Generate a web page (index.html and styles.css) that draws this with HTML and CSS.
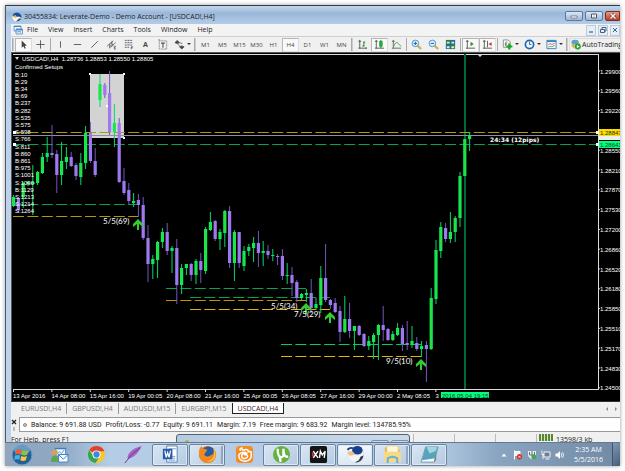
FILE: index.html
```html
<!DOCTYPE html>
<html lang="en">
<head>
<meta charset="utf-8">
<title>30455834: Leverate-Demo - Demo Account - [USDCAD!,H4]</title>
<link rel="stylesheet" href="styles.css">
</head>
<body>
<div class="desktop">
  <main class="window">
    <header class="titlebar">
      <svg class="app-icon" viewBox="0 0 10 10"><circle cx="5" cy="5" r="4.6" fill="#f6f8fb"/><path d="M.5 4C1 1 4 0 6.500 .7 9 1.500 10 4 9.500 6L7 4.500 4 5Z" fill="#164e9c"/><path d="M1 4 3.500 3 5 5 3 6Z" fill="#e8ad43"/><path d="M4 9.600C7 9.700 9 8 9.400 6.500L7 6.500Z" fill="#404b5b"/></svg>
      <span class="title">30455834: Leverate-Demo - Demo Account - [USDCAD!,H4]</span>
      <div class="caption">
        <button aria-label="Minimize"><svg viewBox="0 0 10 6"><path d="M2 3h6v2H2z" fill="#fff" stroke="#465468" stroke-width=".6"/></svg></button>
        <button aria-label="Restore"><svg viewBox="0 0 10 6"><path d="M2.500 1h5v4h-5z" fill="#fff" stroke="#465468"/><path d="M4.500 2.500h1v1h-1z" fill="#465468"/></svg></button>
        <button class="close" aria-label="Close"><svg viewBox="0 0 10 6"><path d="M2.500 .5 7.500 5.500M7.500 .5 2.500 5.500" stroke="#4e2020" stroke-width="2.600"/><path d="M2.500 .5 7.500 5.500M7.500 .5 2.500 5.500" stroke="#fff" stroke-width="1.500"/></svg></button>
      </div>
    </header>
    <nav class="menubar">
      <svg class="doc-icon" viewBox="0 0 10 10"><path d="M1 1h7v5H1zM3 4h6.500v5H3z" fill="#eef6fd" stroke="#4b87bd" stroke-width=".8"/><path d="M1 1.500h7M3 4.500h6.500" stroke="#4b87bd"/><path d="M4.500 7.500 6 6.500 8 7.500" stroke="#4b87bd" stroke-width=".7" fill="none"/></svg>
      <button>File</button><button>View</button><button>Insert</button><button>Charts</button><button>Tools</button><button>Window</button><button>Help</button>
      <div class="mdi">
        <button aria-label="Minimize chart"><svg viewBox="0 0 8 8"><path d="M2 6h4" stroke="#44617f" stroke-width="1.200"/></svg></button>
        <button aria-label="Restore chart"><svg viewBox="0 0 8 8"><path d="M3 3V1.500h4V5H5.500M1.500 3.500h4v3h-4z" stroke="#44617f" fill="none"/></svg></button>
        <button aria-label="Close chart"><svg viewBox="0 0 8 8"><path d="M2 2 6 6M6 2 2 6" stroke="#44617f"/></svg></button>
      </div>
    </nav>
    <div class="toolbar">
      <i class="grip"></i>
      <button class="tool on" aria-label="Cursor"><svg viewBox="0 0 12 12"><path d="M4 1.500V9.500L6 8 7.200 10.500 8.500 10 7.300 7.500 9.500 7Z" fill="#444"/></svg></button>
      <button class="tool" aria-label="Crosshair"><svg viewBox="0 0 12 12"><path d="M6 1.500v9M1.500 6h9" stroke="#555"/></svg></button>
      <i class="sep"></i>
      <button class="tool" aria-label="Vertical line"><svg viewBox="0 0 12 12"><path d="M6 2.500v7" stroke="#555"/></svg></button>
      <button class="tool" aria-label="Horizontal line"><svg viewBox="0 0 12 12"><path d="M2 6h8" stroke="#555"/></svg></button>
      <button class="tool" aria-label="Trendline"><svg viewBox="0 0 12 12"><path d="M2.500 9.500 9.500 2.500" stroke="#555"/></svg></button>
      <button class="tool" aria-label="Channel"><svg viewBox="0 0 12 12"><path d="M1 8 8 2M3.500 10 10.500 4M3 5.500 6 8.500M5 4 8 7M6.500 2v6M4 5v5" stroke="#555" stroke-width=".8"/><path d="M9 8v3h2M9 9.500h1.500M9 8h2" stroke="#444" stroke-width=".7" fill="none"/></svg></button>
      <button class="tool" aria-label="Fibonacci"><svg viewBox="0 0 12 12"><path d="M2 1.500h8M2 4h8M2 6.500h8M2 9h5" stroke="#555" stroke-dasharray="1.300 .4"/><path d="M9 11V8.500h2M9 9.700h1.500" stroke="#444" stroke-width=".8" fill="none"/></svg></button>
      <button class="tool letter" aria-label="Text">A</button>
      <button class="tool" aria-label="Text label"><svg viewBox="0 0 12 12"><path d="M2.500 2h8v9h-8z" stroke="#777" stroke-dasharray="1 .6" fill="none"/><path d="M4.500 4.500h4M6.500 4.500v5" stroke="#555" stroke-width="1.200"/><path d="M1.500 1h2" stroke="#777"/></svg></button>
      <button class="tool menu" aria-label="Arrows"><svg viewBox="0 0 12 12"><path d="M1 4 3.500 1.500 6 4 3.500 5Z M6 8.500 8.500 11 11 8.500 8.500 7.500ZM4 5.500 7 8.500M6 4 9 5" fill="#444" stroke="#444" stroke-width=".8"/></svg><b></b></button>
      <i class="grip"></i>
      <button class="tool tf">M1</button><button class="tool tf">M5</button><button class="tool tf">M15</button><button class="tool tf">M30</button><button class="tool tf">H1</button><button class="tool tf on">H4</button><button class="tool tf">D1</button><button class="tool tf">W1</button><button class="tool tf">MN</button>
      <i class="grip"></i>
      <button class="tool" aria-label="Bar chart"><svg viewBox="0 0 12 12"><path d="M3 1v9.500M1.500 2.500h3M1.500 10h9M10 9v2" stroke="#555"/><path d="M7.500 2.500v6M6 7.500h1.500M7.500 3.500H9" stroke="#26983a" stroke-width="1.200"/></svg></button>
      <button class="tool on" aria-label="Candlesticks"><svg viewBox="0 0 12 12"><path d="M2.500 1v9.500M1 2.500h3M1 10h10" stroke="#555"/><path d="M7.500 1v9" stroke="#188c28"/><path d="M6 2.500h3V8H6z" fill="#22b035" stroke="#188c28" stroke-width=".6"/></svg></button>
      <button class="tool" aria-label="Line chart"><svg viewBox="0 0 12 12"><path d="M2.500 1v9.500M1 2.500h3M1 10h10" stroke="#666"/><path d="M3 8C5 3 7 3 8 5L11 8" stroke="#36a047" fill="none"/></svg></button>
      <i class="sep"></i>
      <button class="tool" aria-label="Zoom in"><svg viewBox="0 0 12 12"><path d="m7 7 4 4" stroke="#d8aa36" stroke-width="2.200"/><circle cx="4.800" cy="4.800" r="3.600" fill="#d5ecfb" stroke="#4a91c8"/><path d="M4.800 3v3.600M3 4.800h3.600" stroke="#1e6dad" stroke-width="1.100"/></svg></button>
      <button class="tool" aria-label="Zoom out"><svg viewBox="0 0 12 12"><path d="m7 7 4 4" stroke="#d8aa36" stroke-width="2.200"/><circle cx="4.800" cy="4.800" r="3.600" fill="#d5ecfb" stroke="#4a91c8"/><path d="M3 4.800h3.600" stroke="#1e6dad" stroke-width="1.100"/></svg></button>
      <button class="tool" aria-label="Tile windows"><svg viewBox="0 0 12 12"><path d="M1 1h10v10H1z" fill="#2c7f45"/><path d="M1 6h5v5H1zM6 1h5v5H6z" fill="#2b68b0"/><path d="M2 3h3v2H2zM7 3h3v2H7zM2 8h3v2H2zM7 8h3v2H7z" fill="#d8f1cb"/></svg></button>
      <i class="sep"></i>
      <button class="tool on" aria-label="Auto scroll"><svg viewBox="0 0 12 12"><path d="M2.500 1v9.500M1 2.500h3M1 10h10" stroke="#555"/><path d="M6 3v5l3.500-2.500Z" fill="#21943a"/></svg></button>
      <button class="tool on" aria-label="Chart shift"><svg viewBox="0 0 12 12"><path d="M2.500 1v9.500M1 2.500h3M1 10h10M6 2v7" stroke="#555"/><path d="M10.500 3.500v4L7 5.500Z" fill="#c63b2c"/></svg></button>
      <i class="sep"></i>
      <button class="tool menu" aria-label="Indicators"><svg viewBox="0 0 12 12"><path d="M1.500 1h5L9 3v6H1.500z" fill="#f7f7f7" stroke="#777" stroke-width=".8"/><path d="M4 8V4.500C4 3 5.500 3 6 3.500M3 5.500h2.500" stroke="#555" stroke-width=".8" fill="none"/><path d="M8 5v6.500M4.700 8.200h6.600" stroke="#17a526" stroke-width="2.400"/></svg><b></b></button>
      <button class="tool menu" aria-label="Periods"><svg viewBox="0 0 12 12"><circle cx="6" cy="6" r="4.500" fill="#e9f5fe" stroke="#1c68b5" stroke-width="1.800"/><path d="M6 3v3h2" stroke="#335" stroke-width=".8" fill="none"/></svg><b></b></button>
      <button class="tool menu" aria-label="Templates"><svg viewBox="0 0 12 12"><path d="M1 1.500h10v9H1z" fill="#f5f8fb" stroke="#3a7fbd"/><path d="M1 2.500h10" stroke="#3a7fbd" stroke-width="1.500"/><path d="m2.500 6 2-1 2 1 3-1.500" stroke="#a05030" stroke-width=".8" fill="none"/><path d="m2.500 9 2-1 2 .5L9.500 7" stroke="#31944a" stroke-width=".8" fill="none"/></svg><b></b></button>
      <i class="grip"></i>
      <button class="auto"><svg viewBox="0 0 12 12"><path d="M1 5 6 2l5 3-4 3Z" fill="#e9be45"/><ellipse cx="5.500" cy="3.300" rx="4" ry="2.500" fill="#5ba0d5"/><path d="M2 5v3l3 3V7Z" fill="#ddb044"/><circle cx="8.500" cy="8.300" r="3.300" fill="#23a434"/><path d="M7.500 6.500v3.600l3-1.800Z" fill="#fff"/></svg>AutoTrading</button>
    </div>
    <svg class="chart" id="chart" viewBox="12 53 608 348" role="img" aria-label="USDCAD!,H4 candlestick chart"></svg>
    <div class="tabs">
      <button>EURUSD!,H4</button><button>GBPUSD!,H4</button><button>AUDUSD!,M15</button><button>EURGBP!,M15</button><button class="active">USDCAD!,H4</button>
      <span class="arrows"><i class="left"></i><i class="right"></i></span>
    </div>
    <div class="terminal">
      <button class="x" aria-label="Close terminal"><svg viewBox="0 0 6 12"><path d="m1 1 4 4M5 1 1 5" stroke="#222" stroke-width="1.300"/><path d="M3 8v4" stroke="#bbb" stroke-width="2"/></svg></button>
      <p><i class="dot"></i><span>Balance: 9 691.88 USD</span><span>Profit/Loss: -0.77</span><span>Equity: 9 691.11</span><span>Margin: 7.19</span><span>Free margin: 9 683.92</span><span>Margin level: 134785.95%</span></p>
    </div>
    <footer class="status">
      <span class="help">For Help, press F1</span>
      <div class="behind"><i></i><b></b><b></b></div>
      <span class="cell"></span><span class="cell"></span><span class="cell"></span><span class="traffic"><i></i>13598/3 kb</span>
    </footer>
  </main>
  <nav class="taskbar">
    <button class="task start" aria-label="Start"><svg viewBox="0 0 22 22"><circle cx="11" cy="11" r="10" fill="#235e96" stroke="#6d9fc9"/><ellipse cx="11" cy="6" rx="8" ry="4.500" fill="#85b4d8" opacity=".7"/><path d="M5 6q3-1.500 5.500 0L9.500 10.500q-2.500-1.300-5.500 0Z" fill="#e9602b"/><path d="M11.500 6.300q3 1.500 6 0l-1.300 4.500q-3 1.300-5.700 0Z" fill="#90c43c"/><path d="M3.800 11.600q3-1.200 5.500 0l-1 4.200q-2.500-1.300-5 .1Z" fill="#49aee6"/><path d="M10.300 12q3 1.400 5.700 0l-1.200 4.200q-2.800 1.400-5.500 0Z" fill="#fbc740"/></svg></button>
    <button class="task" aria-label="Mail"><svg viewBox="0 0 20 20"><path d="M5 3h12v9H5z" fill="#3b7fc1"/><path d="M6 4.500h10V11H6z" fill="#edf6fd"/><path d="m7 10 3-3 2 2 3-4" stroke="#5f9ed0" fill="none"/><circle cx="5" cy="8" r="3.200" fill="#d4a05a"/><path d="M1 18q0-7 4-7t4.500 7Z" fill="#58a854"/><path d="M9 10h10v8H9z" fill="#f4f9ff" stroke="#3e80bd"/><path d="m9 10 5 5 5-5" fill="none" stroke="#3e80bd"/></svg></button>
    <button class="task" aria-label="Chrome"><svg viewBox="0 0 20 20"><circle cx="10" cy="10" r="9" fill="#f4c82d"/><path d="M10 10 2.200 5.500A9 9 0 0 1 18.300 6.500H10Z" fill="#df4033"/><path d="M2.200 5.500A9 9 0 0 0 9 19l4.500-7-6.500 0Z" fill="#30a851"/><circle cx="10" cy="10" r="4.300" fill="#fff"/><circle cx="10" cy="10" r="3.300" fill="#3f84e8"/></svg></button>
    <button class="task" aria-label="Feather"><svg viewBox="0 0 20 20"><path d="M18.500 1Q10 3 6 8 3 12 4 15q8-3 11-8Q17 5 18.500 1Z" fill="#a563c4"/><path d="M1 19Q7 9 17 3" fill="none" stroke="#6b378b"/></svg></button>
    <button class="task open" aria-label="Word"><svg viewBox="0 0 20 20"><path d="M6 1h11v17H6z" fill="#fff" stroke="#5680b7"/><path d="M8 4h8M8 12h7M8 14h7M8 16h7" stroke="#78a0cf"/><path d="M2 4h10v11H2z" fill="#285ba7"/><path d="m4 6 1.500 7L7 8l1.500 5L10 6" fill="none" stroke="#fff" stroke-width="1.300"/></svg></button>
    <button class="task open stack" aria-label="Firefox"><svg viewBox="0 0 20 20"><circle cx="10" cy="10" r="9" fill="#e66b16"/><circle cx="11" cy="8" r="6.500" fill="#245ca6"/><path d="M1 8Q1 3 4 1q0 2 2 3l4 1-2 3q-2 1-1 3 3 2 6 0 4-1 4-6 3 4 1 9-3 6-9 5Q1 17 1 8Z" fill="#f18a1e"/><path d="M16 3q3 4 2 10-3 5-8 5 8-4 7-9Z" fill="#f9cd36"/></svg></button>
    <button class="task" aria-label="UC Browser"><svg viewBox="0 0 20 20"><rect x="1" y="1" width="18" height="18" rx="4" fill="#f68b1f"/><path d="M6 6q-2-2 1-3 0 3 3 2 4-1 4 2 4-1 3 3 1 6-6 7-7 0-7-6 0-2 3-3 3-1 6 1-5-1-6 2 0 4 4 3 3-1 2-3-2-2-3 0" fill="none" stroke="#fff" stroke-width="1.600"/></svg></button>
    <button class="task open" aria-label="uTorrent"><svg viewBox="0 0 20 20"><circle cx="10" cy="10" r="9" fill="#67b13f"/><path d="M6 4q0 7 2 8 3 2 4-1V4q0 10 5 8M8 12q1 4 1 6" fill="none" stroke="#fff" stroke-width="2.400"/></svg></button>
    <button class="task open" aria-label="XM"><svg viewBox="0 0 20 20"><rect x="1" y="1" width="18" height="18" rx="2" fill="#141414"/><path d="m3 7 3 3-3 3" fill="#d42b2b"/><path d="m4.500 6.500 5 7M9.500 6.500l-5 7M11 13.500l1-7 2 4 3-4-1 7" fill="none" stroke="#fff" stroke-width="1.500"/></svg></button>
    <button class="task open current" aria-label="Trading terminal"><svg viewBox="0 0 20 20"><circle cx="10" cy="10" r="8.500" fill="#f3f4f7" stroke="#c9d0da" stroke-width=".5"/><ellipse cx="12" cy="5.500" rx="5.500" ry="4.500" fill="#173f8e"/><path d="M1.500 5q3-3 6-1.500" stroke="#173f8e" stroke-width="2" fill="none"/><path d="M2 8q3-3 6 0l2 2-4 1-3 0Z" fill="#efc07a"/><path d="M9 18.500q8 0 9.500-7.500l-3 1-2 4Z" fill="#353b46"/></svg></button>
    <button class="task open stack" aria-label="Explorer"><svg viewBox="0 0 20 20"><path d="M2 3h6l1 2h9v13H2z" fill="#e8b94f"/><path d="M4 1h12v9H4z" fill="#fff7d8" stroke="#cfb35c" stroke-width=".5"/><path d="M1 7h18v11H1z" fill="#f6da83"/><path d="M5 19v-5q5-3 10 0v5" fill="none" stroke="#6bb2dc" stroke-width="2.200"/></svg></button>
    <button class="task open" aria-label="Notepad"><svg viewBox="0 0 20 20"><path d="M6 2h13l-4 16H1Z" fill="#f3faff" stroke="#7798aa"/><path d="M6 2h13l-3 12-14 2Z" fill="#57a3bd"/><path d="M7 2h11l-1 4-7 3Z" fill="#a3d7df"/><path d="m15 18 2-2V9l-2 8Z" fill="#8b795b"/></svg></button>
    <div class="tray">
      <button aria-label="Show hidden icons"><svg viewBox="0 0 10 10"><path d="m2.500 6.500 2.500-3 2.500 3Z" fill="#fff"/></svg></button>
      <button aria-label="Action Center"><svg viewBox="0 0 10 10"><path d="M1.500 .5v9M2 1.500h5v4H2" stroke="#fff" fill="#f2f2f2"/><circle cx="6.500" cy="6.800" r="2.700" fill="#d3332d"/><path d="m5.500 5.800 2 2m0-2-2 2" stroke="#fff" stroke-width=".8"/></svg></button>
      <button aria-label="Updates"><svg viewBox="0 0 10 10"><path d="M1 1h8v4l-2 4H4L1 6Z" fill="#e7edf3"/><path d="M2.500 2v3h5V2M5 1v4" stroke="#66717b" fill="none"/><circle cx="6.800" cy="6.800" r="2.500" fill="#48a754"/></svg></button>
      <button aria-label="Network"><svg viewBox="0 0 10 10"><path d="M3 2h6v5H3zM4.500 9h4M1 .5v4h2M2 4v5" fill="#6f7d91" stroke="#fff" stroke-width=".9"/></svg></button>
      <button aria-label="Volume"><svg viewBox="0 0 10 10"><path d="M.5 3.500h2l2.500-2.500v8L2.500 6.500h-2Z" fill="#fff"/><path d="M6 3q1.500 2 0 4M7.500 2q2.300 3 0 6" stroke="#fff" stroke-width=".8" fill="none"/></svg></button>
    </div>
    <div class="clock"><span>2:35 AM</span><span>5/5/2016</span></div>
    <button class="peek" aria-label="Show desktop"></button>
  </nav>
</div>
<script src="chart.js"></script>
</body>
</html>
```
FILE: styles.css
```css
* { box-sizing: border-box; }
body {
  margin: 0;
  background: #fff;
  font-family: "Open Sans", "Noto Sans", sans-serif;
  font-size: 7px;
  line-height: 10px;
  color: #222;
}
button {
  margin: 0;
  padding: 0;
  border: 0;
  background: none;
  font: inherit;
  color: inherit;
}
svg { display: block; }
.desktop {
  margin: 5px;
  box-shadow: 0 0 4px #999;
}
.window {
  padding-left: 5px;
  border-left: 1px solid #4e5a68;
  border-top: 1px solid #333b45;
  background: #bcd2ec;
  overflow: hidden;
}
.titlebar {
  display: flex;
  align-items: center;
  height: 18px;
  margin-left: -5px;
  padding: 3px 0 0 6px;
  gap: 2px;
  background: linear-gradient(#c3d8ed, #9ab7d9 40%, #b3cce8);
}
.app-icon, .doc-icon { width: 10px; height: 10px; }
.title { flex: 1; white-space: nowrap; }
.caption {
  display: flex;
  align-self: flex-start;
  gap: 2px;
  margin-top: 2px;
}
.caption button {
  width: 18px;
  height: 10px;
  border: 1px solid #5f7896;
  border-radius: 2px;
  background: linear-gradient(#dbe7f4, #9fb8d5);
}
.caption svg { width: 10px; height: 6px; margin: 1px auto; }
.caption .close {
  width: 15px;
  border-color: #7c2b22;
  border-radius: 2px 0 0 2px;
  background: linear-gradient(#e79a84, #c23c20);
}
.menubar {
  display: flex;
  align-items: center;
  gap: 10px;
  height: 12px;
  padding-left: 2px;
  background: #f3f3f4;
}
.doc-icon { margin-right: -6px; }
.mdi { display: flex; gap: 2px; margin-left: auto; }
.mdi button {
  width: 10px;
  height: 11px;
  border: 1px solid #b9cbdc;
  background: #e6eff8;
}
.mdi svg { width: 8px; height: 8px; }
.toolbar {
  display: flex;
  align-items: center;
  height: 16px;
  background: #f0f0f0;
  border-top: 1px solid #cfcfcf;
}
.tool {
  display: flex;
  flex: none;
  align-items: center;
  justify-content: center;
  width: 17px;
  height: 14px;
  color: #444;
}
.tool svg { width: 11px; height: 11px; }
.on { background: #f9f9f9; border: 1px solid #b6b6b6; border-right-color: #ddd; border-bottom-color: #ddd; }
.letter { font-weight: 700; }
.tf { font-size: 6px; }
.menu { width: 22px; gap: 2px; }
.menu b, .arrows i { border: 2px solid transparent; border-top-color: #333; height: 2px; }
.grip {
  flex: none;
  width: 2px;
  height: 13px;
  margin: 0 1px;
  border-left: 1px solid #aaa;
  border-right: 1px solid #ccc;
}
.sep { flex: none; width: 1px; height: 13px; margin: 0 1px; background: #aaa; }
.auto {
  display: flex;
  flex: 1;
  align-items: center;
  gap: 1px;
  min-width: 0;
  height: 14px;
  overflow: hidden;
  border: 1px solid #ddd;
  border-right: 0;
  white-space: nowrap;
}
.auto svg { flex: none; width: 11px; height: 11px; }
.chart {
  width: 100%;
  height: auto;
  background: #000;
  border: solid #555;
  border-width: 1px 0 0 1px;
}
.chart text { font-family: "Liberation Sans", sans-serif; font-size: 6px; fill: #fff; }
.chart .setup { font-family: Lato, sans-serif; font-size: 8px; }
.chart .timer { font-family: "DejaVu Sans", sans-serif; font-size: 6px; font-weight: 700; }
.chart .dark { fill: #063c20; }
.tabs {
  display: flex;
  height: 14px;
  padding: 2px 0 0 5px;
  background: linear-gradient(#333 1px, #f0f0f0 1px);
  color: #777;
}
.tabs button {
  height: 11px;
  padding: 0 5px;
  border-right: 1px solid #999;
  line-height: 11px;
}
.tabs button:nth-child(4) { border-color: #222; }
.tabs .active {
  border: 1px solid #222;
  border-width: 0 1px 1px 0;
  background: #fff;
  color: #402535;
}
.arrows { display: flex; align-items: center; gap: 7px; margin-left: auto; padding-right: 1px; }
.arrows i { width: 4px; height: 4px; border-color: transparent; }
.arrows .left { border-right-color: #888; }
.arrows .right { border-left-color: #888; }
.terminal {
  display: flex;
  height: 17px;
  padding-top: 2px;
  gap: 2px;
  background: #f0f0f0;
  font-family: Roboto, sans-serif;
}
.terminal .x svg { width: 6px; height: 12px; }
.terminal p {
  display: flex;
  flex: 1;
  align-items: center;
  gap: 4px;
  margin: 0;
  padding-left: 3px;
  border: 1px solid #999;
  border-right: 0;
  background: #fff;
  white-space: nowrap;
}
.dot { width: 4px; height: 4px; border: 1px solid #888; border-radius: 50%; background: #ccc; }
.status {
  display: flex;
  height: 10px;
  padding-top: 2px;
  background: #f0f0f0;
  overflow: hidden;
  line-height: 12px;
  white-space: nowrap;
}
.help { flex: 0 0 165px; }
.behind {
  display: flex;
  flex: 0 0 234px;
  gap: 2px;
  height: 12px;
  border: 1px solid #53606e;
  border-radius: 3px 3px 0 0;
  background: linear-gradient(90deg, #b5cbe0, #c9daea);
}
.behind i { width: 4px; height: 4px; margin: 5px auto 0 8px; border-radius: 50%; background: #c8a441; }
.behind b { width: 18px; height: 6px; margin-top: 5px; border: 1px solid #7b91a8; border-radius: 2px; }
.cell { width: 41px; border-left: 1px solid #bbb; }
.behind + .cell { margin-left: 3px; }
.traffic { display: flex; gap: 3px; padding-left: 2px; border-left: 1px solid #bbb; }
.traffic i { width: 14px; height: 7px; background: repeating-linear-gradient(90deg, #588736 0 2px, #d9e6c8 2px 3px); }
.taskbar {
  display: flex;
  align-items: center;
  height: 24px;
  padding-left: 1px;
  border-top: 1px solid #65798f;
  background: linear-gradient(90deg, #91a6bd, #8fa8c3 9%, #b4cce5 17%, #b4cce5 70%, #8aa5c1 80%, #7189a4);
}
.task {
  display: flex;
  flex: none;
  align-items: center;
  justify-content: center;
  width: 36px;
  height: 22px;
  margin-right: 1px;
}
.task svg { width: 19px; height: 19px; }
.start { width: 31px; margin-right: 4px; }
.start svg { width: 22px; height: 22px; }
.open {
  border: 1px solid #6b84a0;
  border-radius: 2px;
  background: linear-gradient(135deg, #d9e6f3, #b4cae2);
  box-shadow: inset 0 0 0 1px #dce8f4;
}
.stack { box-shadow: inset 0 0 0 1px #dce8f4, inset -3px 0 #8ea6c0; }
.current { background: linear-gradient(#f4f8fc, #dbe7f4); }
.tray { display: flex; gap: 4px; margin-left: auto; }
.tray button, .tray svg { width: 10px; height: 10px; }
.clock { display: flex; flex-direction: column; align-items: center; width: 47px; color: #fff; }
.peek { width: 8px; height: 23px; border-left: 1px solid #405368; background: linear-gradient(135deg, #8098b1, #455e7a); }
```
FILE: chart.js
```js
// Each candle: direction (1 up, 0 down), wick top, wick bottom, body top, body bottom
const candles = [
  [1,195,207,197,206],[0,198,213,198,210],[1,182,208,183,197],[1,181,186,182,184],[1,165,215,182,184],
  [1,171,185,172,183],[1,153,174,157,173],[1,137,162,153,157],[0,125,158,153,155],[0,150,193,154,175],
  [1,142,185,161,175],[1,147,169,157,162],[0,152,167,157,166],[0,163,180,165,176],[1,153,185,163,177],
  [1,126,169,133,163],[0,122,163,133,161],[0,148,177,161,175],[1,74,107,84,100],[0,83,98,85,95],
  [0,71,135,93,132],[1,104,147,123,132],[0,118,183,123,182],[0,168,195,181,193],[0,183,204,190,201],
  [1,193,207,201,203],[0,194,217,200,205],[0,197,240,205,238],[0,225,282,238,264],[1,255,279,259,264],
  [1,241,278,242,260],[1,228,248,232,242],[0,223,255,232,251],[1,246,273,248,251],[0,239,304,248,285],
  [1,264,294,268,285],[1,264,275,264,268],[0,263,281,264,275],[1,259,284,261,275],[0,253,283,261,270],
  [1,227,274,229,271],[1,212,231,222,230],[0,220,241,221,239],[1,229,250,232,239],[1,210,247,211,233],
  [0,206,268,211,263],[1,230,281,232,263],[0,232,268,232,263],[1,246,271,251,266],[1,244,256,247,251],
  [1,237,262,243,248],[0,231,267,243,253],[1,241,266,251,253],[0,245,259,251,255],[1,249,261,255,256],
  [0,254,265,256,257],[0,249,280,256,276],[1,263,284,275,276],[0,267,296,275,283],[0,280,302,282,298],
  [1,293,300,294,298],[1,289,302,293,295],[0,279,313,293,308],[1,298,310,304,308],[1,266,313,278,305],
  [0,244,302,278,300],[0,299,309,300,305],[0,298,313,303,312],[0,306,342,311,332],[1,296,333,319,332],
  [0,303,338,319,331],[1,326,350,326,331],[0,325,336,326,335],[0,333,347,334,346],[1,336,350,341,346],
  [1,333,359,335,342],[1,324,360,325,335],[0,306,341,325,330],[0,328,341,329,340],[1,331,341,334,340],
  [1,323,336,328,335],[0,325,351,328,344],[0,321,350,343,345],[1,326,348,341,345],[0,337,351,343,349],
  [1,341,357,346,349],[0,341,382,345,349],[1,288,350,298,349],[1,240,304,250,299],[1,222,258,227,251],
  [0,223,242,228,239],[1,212,243,232,239],[1,216,242,218,232],[1,172,227,176,218],[1,139,176,139,176],
  [1,132,151,135,139]
];
const prices = ["1.29900","1.29560","1.29220","","1.28550","1.28210","1.27870","1.27530","1.27200",
  "1.26860","1.26520","1.26180","1.25850","1.25510","1.25170","1.24830","1.24500"];
const dates = ["13 Apr 2016","14 Apr 08:00","15 Apr 16:00","19 Apr 00:05","20 Apr 08:00","21 Apr 16:00",
  "25 Apr 00:05","26 Apr 08:05","27 Apr 16:00","29 Apr 00:00","2 May 08:05","3"];
const setups = ["B:10","B:29","B:34","B:69","B:237","B:282","S:535","S:575","S:598","S:766","S:811","B:860",
  "B:861","B:975","S:1001","S:1090","B:1129","S:1213","S:1214","S:1264"];

const line = (x1, y1, x2, y2, color, width = 1, dash = "") =>
  `<line x1="${x1}" y1="${y1}" x2="${x2}" y2="${y2}" stroke="${color}" stroke-width="${width}" stroke-dasharray="${dash}"/>`;
const rect = (x, y, w, h, fill) => `<rect x="${x}" y="${y}" width="${w}" height="${h}" fill="${fill}"/>`;
const text = (x, y, s, cls = "") => `<text x="${x}" y="${y}" class="${cls}">${s}</text>`;
const gold = "#bd9500", green = "#00a455", dash = "11 3.4";

let out = rect(90, 74, 34, 64, "#d3d3d3");
out += line(13, 54.5, 599, 54.5, "#ddd") + line(598.5, 54, 598.5, 390, "#ddd") + line(13, 389.5, 599, 389.5, "#ddd");
out += line(465, 54, 465, 389, "#006b38", 2);
out += line(13, 132.5, 598, 132.5, gold, 1, dash) + line(13, 144.5, 598, 144.5, green, 1, dash);
out += line(13, 135.5, 598, 135.5, "#8792a5");
for (const [x1, x2, y, c] of [[13,138,204.5,green],[13,138,216.5,gold],[166,306,288.5,green],[190,330,297.5,green],
  [166,306,300.5,gold],[190,330,309.5,"#e3b400"],[281,421,344.5,"#00cc6a"],[281,421,356.5,"#e3b400"]])
  out += line(x1, y, x2, y, c, 1, dash);

candles.forEach(([up, high, low, top, bottom], i) => {
  const x = 13.6 + 4.8 * i;
  out += line(x, high, x, low, up ? "#00d968" : "#7455bd", 1);
  out += rect(x - 1.6, top, 3.2, Math.max(1, bottom - top), up ? "#00f064" : "#9d78ee");
  if (up && bottom - top > 3) out += rect(x - .6, top + 1, 1.2, bottom - top - 2, "#43d52a");
});

for (const [x, y] of [[90,74],[124,74],[124,138],[107,106]]) out += rect(x - 1, y - 1, 2, 2, "#fff");
for (const [x, y] of [[138,219],[306,303],[330,312],[421,359]])
  out += `<path d="M${x} ${y}l5 5v3l-4-3v6h-2v-6l-4 3v-3z" fill="#32cd32"/>`;

out += `<path d="M15 57h4l-2 3zM477 54h6l-3 3z" fill="#cbd6e2"/>`;
out += text(22, 61, "USDCAD!,H4&#160; 1.28736 1.28853 1.28550 1.28805") + text(15, 69, "Confirmed Setups");
setups.forEach((s, i) => out += text(15, 76.5 + 7.2 * i, s));
out += text(103, 224, "5/5(69)", "setup") + text(271, 309, "5/5(34)", "setup");
out += text(294, 317, "7/5(29)", "setup") + text(386, 364, "9/5(10)", "setup");
out += text(490, 142, "24:34 (12pips)", "timer");

prices.forEach((p, i) => {
  const y = 71 + 19.8 * i;
  out += line(598, y, 600, y, "#ddd");
  if (p) out += text(600, y + 2.5, p);
});
out += rect(599, 135, 21, 5, "#eee") + rect(599, 129, 21, 7, "#ffd900") + rect(599, 141, 21, 7, "#00ff7f");
out += text(600, 135, "1.28847", "dark") + text(600, 147, "1.28641", "dark");
for (const [x, y] of [[13,132],[13,144],[596,132],[596,144]]) out += rect(x, y - 1, 3, 3, "#fff");

dates.forEach((d, i) => {
  const x = 13 + 38.4 * i;
  out += line(x + .5, 389, x + .5, 392, "#ddd") + text(x, 397.5, d);
});
out += rect(441, 392, 48, 6, "#00ff7f") + text(442, 397.5, "2016.05.04 19:15", "dark");
document.getElementById("chart").innerHTML = out;
```
